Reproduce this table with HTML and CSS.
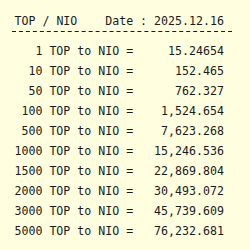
FILE: index.html
```html
<!DOCTYPE html>
<html>
<head>
<meta charset="utf-8">
<link rel="stylesheet" href="styles.css">
</head>
<body>
<div class="sheet">
  <div class="head">
    <span>TOP / NIO</span>
    <span>Date : 2025.12.16</span>
  </div>
  <div class="divider"></div>
  <div class="rows">
    <div class="row"><span class="amt">1</span><span>TOP to NIO =</span><span class="val">15.24654</span></div>
    <div class="row"><span class="amt">10</span><span>TOP to NIO =</span><span class="val">152.465</span></div>
    <div class="row"><span class="amt">50</span><span>TOP to NIO =</span><span class="val">762.327</span></div>
    <div class="row"><span class="amt">100</span><span>TOP to NIO =</span><span class="val">1,524.654</span></div>
    <div class="row"><span class="amt">500</span><span>TOP to NIO =</span><span class="val">7,623.268</span></div>
    <div class="row"><span class="amt">1000</span><span>TOP to NIO =</span><span class="val">15,246.536</span></div>
    <div class="row"><span class="amt">1500</span><span>TOP to NIO =</span><span class="val">22,869.804</span></div>
    <div class="row"><span class="amt">2000</span><span>TOP to NIO =</span><span class="val">30,493.072</span></div>
    <div class="row"><span class="amt">3000</span><span>TOP to NIO =</span><span class="val">45,739.609</span></div>
    <div class="row"><span class="amt">5000</span><span>TOP to NIO =</span><span class="val">76,232.681</span></div>
  </div>
</div>
</body>
</html>
```

FILE: styles.css
```css
html, body {
  margin: 0;
  padding: 0;
  background: #ffffe0;
}
.sheet {
  font-family: "DejaVu Sans Mono", monospace;
  font-size: 11.6px;
  color: #1a1a1a;
  padding: 11px 0 0 14.5px;
}
.head {
  display: flex;
  justify-content: space-between;
  width: 30ch;
  line-height: 20px;
}
.divider {
  width: 32ch;
  height: 1px;
  margin-left: -4px;
  background-image: linear-gradient(to right, transparent 0 1.2px, #1a1a1a 1.2px 4.6px, transparent 4.6px);
  background-size: 1ch 1px;
  background-repeat: repeat-x;
}
.rows {
  margin-top: 9px;
}
.row {
  display: grid;
  grid-template-columns: 4ch auto 1fr;
  column-gap: 1ch;
  width: 30ch;
  line-height: 20px;
}
.amt, .val {
  text-align: right;
}
```
